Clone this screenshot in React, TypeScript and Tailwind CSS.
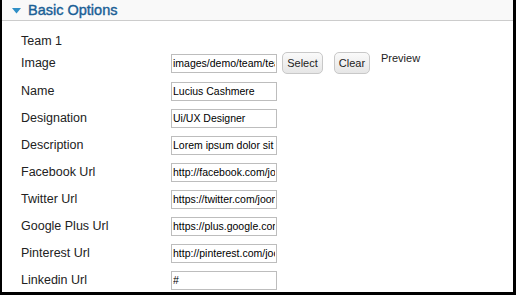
const rows: { label: string; value: string }[] = [
  { label: "Name", value: "Lucius Cashmere" },
  { label: "Designation", value: "Ui/UX Designer" },
  { label: "Description", value: "Lorem ipsum dolor sit amet" },
  { label: "Facebook Url", value: "http://facebook.com/joomshaper" },
  { label: "Twitter Url", value: "https://twitter.com/joomshaper" },
  { label: "Google Plus Url", value: "https://plus.google.com/joomshaper" },
  { label: "Pinterest Url", value: "http://pinterest.com/joomshaper" },
  { label: "Linkedin Url", value: "#" },
];

function Field({ value }: { value: string }) {
  return (
    <input
      readOnly
      value={value}
      className="w-[106px] h-[19px] border border-[#bdbdbd] bg-white px-[1px] text-[10.5px] text-black outline-none"
    />
  );
}

export default function App() {
  return (
    <div className="w-[516px] h-[295px] bg-black pl-[2px] pr-[3px] pb-[3px] font-['Liberation_Sans',Arial,sans-serif]">
      <div className="h-full bg-white overflow-hidden">
        {/* Header */}
        <div className="h-[21px] bg-[#f9f9f9] border-b border-[#cccccc] flex items-center pl-[10px]">
          <svg width="9" height="6" viewBox="0 0 9 6" className="mr-[7px] mt-[1px]">
            <polygon points="0,0 9,0 4.5,5.5" fill="#2f8fc6" />
          </svg>
          <span className="text-[14.5px] text-[#1a5f96] leading-none [-webkit-text-stroke:0.4px_#1a5f96]">Basic Options</span>
        </div>

        <div className="pl-[19px] pt-[13px]">
          <div className="text-[12.5px] text-[#222] h-[14px] leading-[14px]">Team 1</div>

          {/* Image row */}
          <div className="flex items-center mt-[4px] h-[22px]">
            <div className="w-[150px] text-[12.5px] text-[#222]">Image</div>
            <Field value="images/demo/team/team1.jpg" />
            <button className="ml-[5px] h-[22px] w-[41px] rounded-[5px] border border-[#c8c8c8] bg-gradient-to-b from-[#fafafa] to-[#e6e6e6] text-[11px] text-[#222]">
              Select
            </button>
            <button className="ml-[11px] h-[22px] w-[36px] rounded-[5px] border border-[#c8c8c8] bg-gradient-to-b from-[#fafafa] to-[#e6e6e6] text-[11px] text-[#222]">
              Clear
            </button>
            <span className="ml-[11px] self-start -mt-[2px] text-[11px] text-[#222]">Preview</span>
          </div>

          {rows.map((r, i) => (
            <div key={r.label} className={`flex items-center h-[22px] ${i === 0 ? "mt-[6px]" : "mt-[5px]"}`}>
              <div className="w-[150px] text-[12.5px] text-[#222]">{r.label}</div>
              <Field value={r.value} />
            </div>
          ))}
        </div>
      </div>
    </div>
  );
}
